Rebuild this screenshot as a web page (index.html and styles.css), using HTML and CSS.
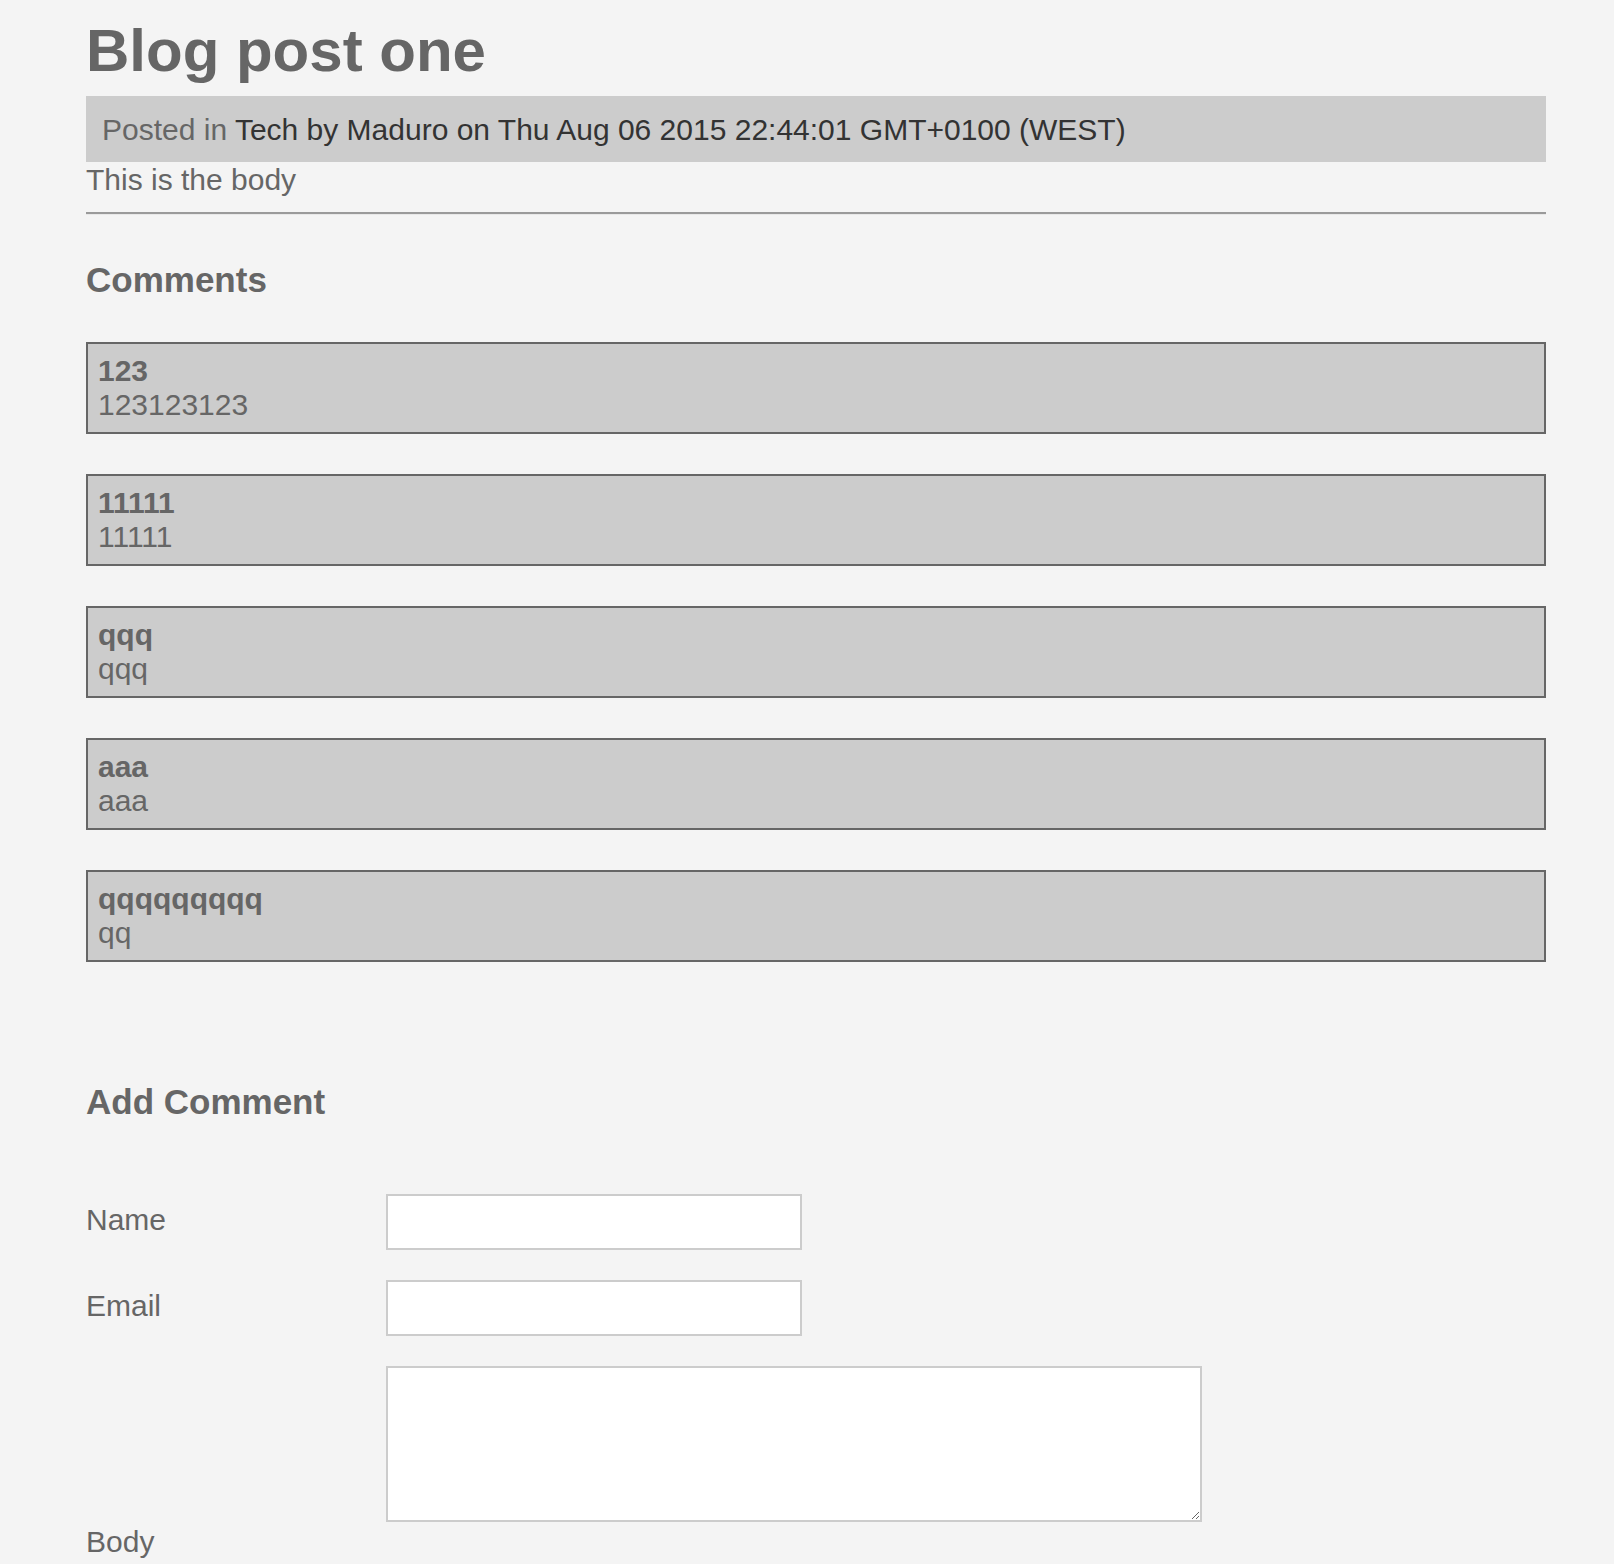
FILE: index.html
```html
<!DOCTYPE html>
<html>
<head>
<meta charset="utf-8">
<title>Blog post one</title>
<link rel="stylesheet" href="styles.css">
</head>
<body>
<div class="page">
  <article class="post">
    <h1 class="post-title">Blog post one</h1>
    <div class="post-meta"><span class="meta-label">Posted in</span> Tech by Maduro on Thu Aug 06 2015 22:44:01 GMT+0100 (WEST)</div>
    <div class="post-body">This is the body</div>
  </article>
  <hr class="divider">
  <section class="comments">
    <h3 class="section-title">Comments</h3>
    <div class="comment-list">
      <div class="comment"><div class="comment-name">123</div><div class="comment-text">123123123</div></div>
      <div class="comment"><div class="comment-name">11111</div><div class="comment-text">11111</div></div>
      <div class="comment"><div class="comment-name">qqq</div><div class="comment-text">qqq</div></div>
      <div class="comment"><div class="comment-name">aaa</div><div class="comment-text">aaa</div></div>
      <div class="comment"><div class="comment-name">qqqqqqqqq</div><div class="comment-text">qq</div></div>
    </div>
  </section>
  <section class="add-comment">
    <h3 class="section-title add-title">Add Comment</h3>
    <form class="comment-form">
      <div class="form-row">
        <label class="form-label" for="name">Name</label>
        <input class="form-input" id="name" type="text">
      </div>
      <div class="form-row">
        <label class="form-label" for="email">Email</label>
        <input class="form-input" id="email" type="text">
      </div>
      <div class="form-row form-row-body">
        <label class="form-label" for="body">Body</label>
        <textarea class="form-textarea" id="body"></textarea>
      </div>
    </form>
  </section>
</div>
</body>
</html>
```

FILE: styles.css
```css
html, body {
  margin: 0;
  padding: 0;
  background: #f4f4f4;
}

body {
  font-family: "Liberation Sans", Arial, Helvetica, sans-serif;
  font-size: 30px;
  line-height: 34px;
  color: #666;
}

.page {
  width: 1460px;
  margin-left: 86px;
  padding-top: 17px;
}

.post-title {
  margin: 0 0 12px 0;
  font-size: 60px;
  line-height: 67px;
  font-weight: bold;
  color: #666;
}

.post-meta {
  background: #ccc;
  padding: 17px 16px 15px 16px;
  color: #333;
}

.meta-label {
  color: #666;
}

.post-body {
  color: #666;
  padding-top: 1px;
}

.divider {
  margin: 15px 0 0 0;
  height: 0;
  border: 0;
  border-top: 2px solid #9a9a9a;
  border-bottom: 1px solid #e8e8e8;
}

.section-title {
  margin: 45px 0 0 0;
  font-size: 35px;
  line-height: 40px;
  font-weight: bold;
  color: #666;
}

.comment-list {
  display: flex;
  flex-direction: column;
  gap: 40px;
  margin-top: 42px;
}

.comment {
  background: #ccc;
  border: 2px solid #666;
  padding: 10px 10px;
  min-height: 68px;
}

.comment-name {
  font-weight: bold;
}

.add-title {
  margin-top: 120px;
}

.comment-form {
  display: flex;
  flex-direction: column;
  gap: 30px;
  margin-top: 72px;
}

.form-row {
  display: flex;
  align-items: center;
}

.form-label {
  width: 300px;
  flex: none;
  padding-bottom: 4px;
}

.form-input {
  box-sizing: border-box;
  width: 416px;
  height: 56px;
  margin: 0;
  border: 2px solid #ccc;
  background: #fff;
  font-family: inherit;
  font-size: 26px;
  padding: 4px 8px;
  outline: none;
}

.form-row-body {
  align-items: flex-end;
}

.form-row-body .form-label {
  padding-bottom: 0;
}

.form-textarea {
  box-sizing: border-box;
  width: 816px;
  height: 156px;
  margin: 0 0 37px 0;
  border: 2px solid #ccc;
  background: #fff;
  font-family: inherit;
  font-size: 26px;
  padding: 4px 8px;
  outline: none;
}
```
